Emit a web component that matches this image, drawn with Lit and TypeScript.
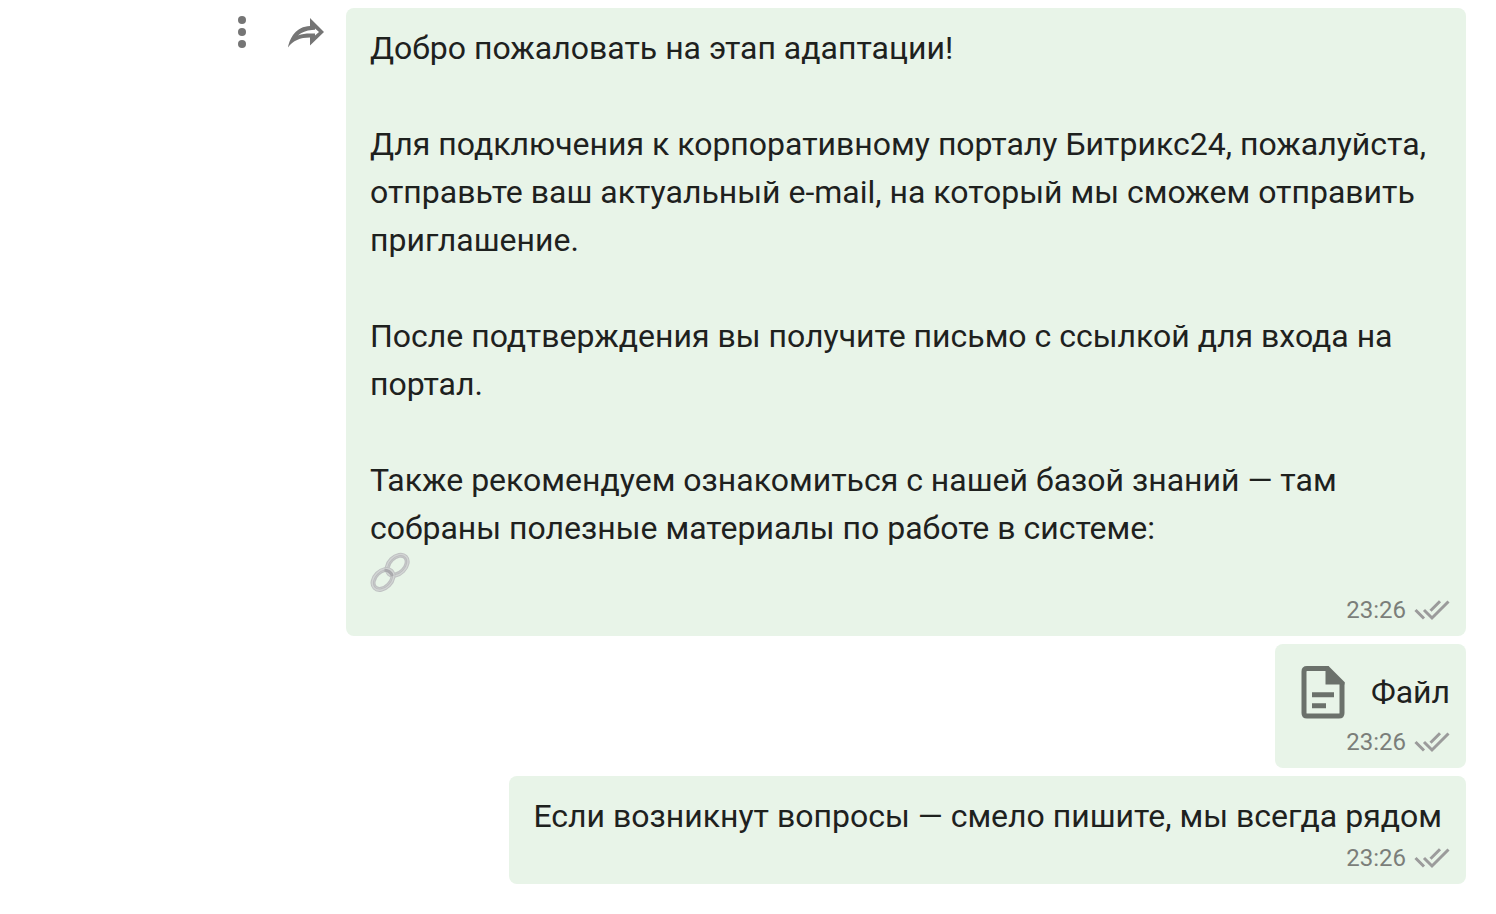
import { LitElement, html, css, svg } from "lit";
import { customElement, property } from "lit/decorators.js";

@customElement("message-status")
class MessageStatus extends LitElement {
  @property() time = "";

  static styles = css`
    :host {
      display: flex;
      justify-content: flex-end;
      align-items: center;
      gap: 8px;
      margin-top: 6px;
      font-size: 24px;
      line-height: 24px;
      color: #7b7e7a;
    }
    .checks {
      display: block;
      width: 36px;
      height: 24px;
      fill: none;
      stroke: #9b9b9b;
      stroke-width: 3;
    }
  `;

  render() {
    return html`<time>${this.time}</time>
      <svg class="checks" viewBox="0 0 36 24" role="img" aria-label="Прочитано">
        <path d="M1.5 12 L10 20.5 M10 12 L18 20 L34.5 3.5 M16.5 12.7 L26 3.2" />
      </svg>`;
  }
}

@customElement("app-root")
class AppRoot extends LitElement {
  static styles = css`
    :host {
      display: block;
      font-family: Roboto, "Noto Sans", sans-serif;
      font-size: 32px;
      line-height: 48px;
      color: #1e211e;
      background: #fff;
    }
    .chat {
      display: flex;
      flex-direction: column;
      align-items: flex-end;
      gap: 8px;
      padding: 8px 30px 30px;
    }
    .row {
      display: flex;
      align-items: flex-start;
      justify-content: flex-end;
    }
    .actions {
      display: flex;
      flex: none;
      gap: 16px;
      margin-right: 16px;
    }
    .action {
      width: 48px;
      height: 48px;
      padding: 0;
      border: 0;
      background: none;
      color: #757575;
      cursor: pointer;
    }
    .glyph {
      display: block;
      width: 48px;
      height: 48px;
    }
    .bubble {
      box-sizing: border-box;
      max-width: 1120px;
      padding: 16px 16px 14px 24px;
      border-radius: 8px;
      background: #e8f4e8;
    }
    .text {
      margin: 0;
      padding-right: 8px;
      white-space: pre-wrap;
    }
    .link {
      display: block;
      width: 40px;
      height: 40px;
    }
    .attachment {
      padding-left: 16px;
    }
    .file {
      display: flex;
      align-items: center;
      gap: 16px;
      color: inherit;
      text-decoration: none;
    }
    .document {
      display: block;
      width: 64px;
      height: 64px;
      color: #6b716b;
    }
  `;

  private welcome = [
    "Добро пожаловать на этап адаптации!",
    "Для подключения к корпоративному порталу Битрикс24, пожалуйста, отправьте ваш актуальный e-mail, на который мы сможем отправить приглашение.",
    "После подтверждения вы получите письмо с ссылкой для входа на портал.",
    "Также рекомендуем ознакомиться с нашей базой знаний — там собраны полезные материалы по работе в системе:",
  ].join("\n\n");

  private ring(cx: number, cy: number) {
    return svg`<g transform="translate(${cx} ${cy}) rotate(-45)" fill="none">
      <ellipse rx="11.6" ry="8" stroke="#bfc1c2" stroke-width="5" />
      <ellipse rx="11.8" ry="8.2" stroke="#d2d5d4" stroke-width="2.6" />
      <ellipse rx="11.2" ry="7.6" stroke="#bcbdbf" stroke-width="1" />
    </g>`;
  }

  render() {
    return html`<main class="chat">
      <div class="row">
        <div class="actions">
          <button class="action" aria-label="Меню">
            <svg class="glyph" viewBox="0 0 48 48" fill="currentColor">
              <circle cx="24" cy="12" r="4" />
              <circle cx="24" cy="24" r="4" />
              <circle cx="24" cy="36" r="4" />
            </svg>
          </button>
          <button class="action" aria-label="Переслать">
            <svg class="glyph" viewBox="0 0 48 48" fill="currentColor" fill-rule="evenodd">
              <path d="M28 10 L42 24 L28 37.6 V29.5 C18 29.5 11 32.5 6 39.5 C8 29.5 14 18.5 28 18 Z M33 20.4 L37 24 L33 27.6 V25.6 H28 C23.5 25.6 20 26 16 27.4 C19.5 24 24.5 22.3 30 21.9 L33 21.8 Z" />
            </svg>
          </button>
        </div>
        <article class="bubble">
          <p class="text">${this.welcome}</p>
          <svg class="link" viewBox="0 0 40 40" role="img" aria-label="Ссылка">
            ${this.ring(27.2, 13.2)}
            ${this.ring(13, 27.4)}
            <path d="M14.5 18 Q20 18.5 22.5 24" stroke="#99989d" stroke-width="3" fill="none" opacity=".6" />
          </svg>
          <message-status time="23:26"></message-status>
        </article>
      </div>
      <article class="bubble attachment">
        <a class="file" href="#">
          <svg class="document" viewBox="0 0 64 64" fill="none">
            <path d="M37.5 8.5 H16 Q13 8.5 13 11.5 V53 Q13 56 16 56 H48 Q51 56 51 53 V22" stroke="currentColor" stroke-width="5" />
            <path d="M34.5 6 H37.5 L53.5 22 V24.5 H34.5 Z" fill="currentColor" />
            <path d="M21 34.7 H43 M21 45.7 H35" stroke="currentColor" stroke-width="5" />
          </svg>
          <span>Файл</span>
        </a>
        <message-status time="23:26"></message-status>
      </article>
      <article class="bubble">
        <p class="text">Если возникнут вопросы — смело пишите, мы всегда рядом</p>
        <message-status time="23:26"></message-status>
      </article>
    </main>`;
  }
}
